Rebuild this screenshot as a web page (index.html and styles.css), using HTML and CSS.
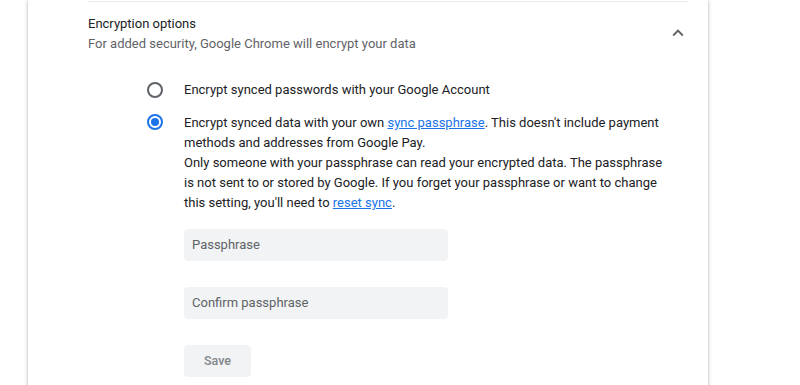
FILE: index.html
```html
<!DOCTYPE html>
<html>
<head>
<meta charset="utf-8">
<link rel="stylesheet" href="styles.css">
</head>
<body>
<div class="page">
  <div class="card">
    <div class="section">
      <div class="header">
        <div class="header-text">
          <div class="title">Encryption options</div>
          <div class="subtitle">For added security, Google Chrome will encrypt your data</div>
        </div>
        <svg class="chevron" viewBox="0 0 24 24" width="22" height="22"><path d="M12 8l-6 6 1.41 1.41L12 10.83l4.59 4.58L18 14z" fill="#5f6368"/></svg>
      </div>
      <div class="options">
        <div class="option first">
          <span class="radio"></span>
          <div class="label">Encrypt synced passwords with your Google Account</div>
        </div>
        <div class="option">
          <span class="radio checked"></span>
          <div class="label">Encrypt synced data with your own <a class="link">sync passphrase</a>. This doesn't include payment methods and addresses from Google Pay.<br>Only someone with your passphrase can read your encrypted data. The passphrase is not sent to or stored by Google. If you forget your passphrase or want to change this setting, you'll need to <a class="link">reset sync</a>.</div>
        </div>
        <div class="form">
          <div class="input">Passphrase</div>
          <div class="input">Confirm passphrase</div>
          <div class="button">Save</div>
        </div>
      </div>
    </div>
  </div>
</div>
</body>
</html>
```

FILE: styles.css
```css
html, body {
  margin: 0;
  padding: 0;
  background: #ffffff;
  font-family: Roboto, "Noto Sans", sans-serif;
  font-size: 13px;
  color: #202124;
}
.page {
  padding-left: 28px;
  height: 385px;
  overflow: hidden;
}
.card {
  width: 680px;
  height: 400px;
  background: #ffffff;
  box-shadow: 0 1px 2px 0 rgba(60,64,67,0.3), 0 1px 4px 1px rgba(60,64,67,0.15);
  padding-top: 1px;
  box-sizing: border-box;
}
.section {
  margin: 0 20px 0 60px;
  border-top: 1px solid #e8eaed;
}
.header {
  display: flex;
  align-items: center;
  height: 64px;
}
.header-text {
  flex: 1;
  line-height: 20px;
}
.title {
  color: #202124;
}
.subtitle {
  color: #5f6368;
}
.chevron {
  display: block;
  margin-right: -1px;
  margin-bottom: 2px;
}
.options {
  padding-left: 59px;
  padding-top: 14px;
}
.option {
  display: flex;
  align-items: flex-start;
  line-height: 20px;
  padding-right: 20px;
}
.option.first {
  margin-bottom: 13px;
}
.radio {
  flex: none;
  width: 16px;
  height: 16px;
  box-sizing: border-box;
  border: 2px solid #5f6368;
  border-radius: 50%;
  margin-top: 2px;
  margin-right: 21px;
  position: relative;
}
.radio.checked {
  border-color: #1a73e8;
  margin-top: 1px;
}
.radio.checked::after {
  content: "";
  position: absolute;
  left: 2px;
  top: 2px;
  width: 8px;
  height: 8px;
  border-radius: 50%;
  background: #1a73e8;
}
.label {
  flex: 1;
  color: #202124;
}
.link {
  color: #1a73e8;
  text-decoration: underline;
}
.form {
  padding-left: 37px;
  padding-top: 16px;
  display: flex;
  flex-direction: column;
  align-items: flex-start;
  gap: 26px;
}
.input {
  width: 264px;
  height: 32px;
  box-sizing: border-box;
  background: #f1f3f4;
  border-radius: 4px;
  padding-left: 8px;
  line-height: 32px;
  color: #5f6368;
}
.button {
  width: 67px;
  height: 32px;
  box-sizing: border-box;
  background: #f1f3f4;
  border-radius: 4px;
  line-height: 32px;
  text-align: center;
  font-weight: 500;
  color: #80868b;
  font-size: 12.5px;
}
```
